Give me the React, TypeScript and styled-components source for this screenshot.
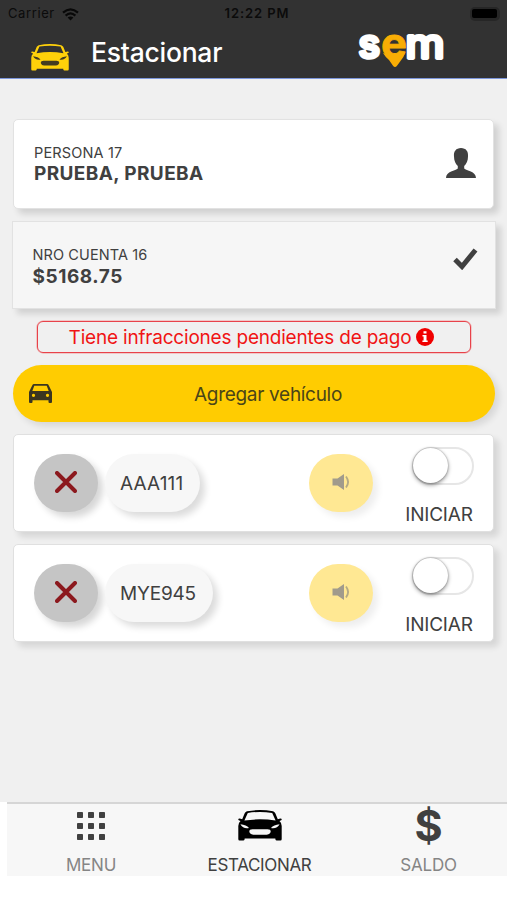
import React from "react";
import styled, { createGlobalStyle } from "styled-components";

const GlobalStyle = createGlobalStyle`
  * { box-sizing: border-box; }
  body { margin: 0; background: #fff; font-family: Inter, "Liberation Sans", sans-serif; color: #404040; }
  svg { display: block; flex: none; }
`;

const Screen = styled.div`
  width: 507px;
  height: 900px;
  display: flex;
  flex-direction: column;
  overflow: hidden;
  background: #fff;
`;

const Header = styled.header`
  height: 79px;
  flex: none;
  background: #323232;
  border-bottom: 1px solid #7d97dc;
`;

const StatusBar = styled.div`
  height: 27px;
  padding: 1px 7px 0 8px;
  display: grid;
  grid-template-columns: 1fr auto 1fr;
  align-items: center;
  color: #0b0b0b;
`;

const Carrier = styled.div`
  display: flex;
  align-items: center;
  gap: 7px;
`;

const Clock = styled.div`
  display: flex;
  padding-left: 6px;
`;

const Label = styled.span<{ $size: number; $weight?: number; $spacing?: number; $color?: string }>`
  font-size: ${(p) => p.$size}px;
  font-weight: ${(p) => p.$weight ?? 400};
  letter-spacing: ${(p) => p.$spacing ?? 0}px;
  color: ${(p) => p.$color ?? "inherit"};
  line-height: 1.2;
  white-space: nowrap;
`;

const Battery = styled.div`
  justify-self: end;
  width: 30px;
  height: 14px;
  padding: 2px;
  border-radius: 5px;
  background: #262626;
  &::before {
    content: "";
    display: block;
    height: 9px;
    width: 25px;
    border-radius: 2px;
    background: #000;
  }
`;

const TitleBar = styled.div`
  height: 51px;
  display: flex;
  padding-left: 31px;
`;

const TitleIcon = styled.div`
  padding-top: 17px;
  width: 60px;
`;

const Title = styled.h1`
  margin: 9px 0 0;
  width: 261px;
  font-size: 26.5px;
  font-weight: 500;
  line-height: 32px;
  letter-spacing: -0.25px;
  color: #fff;
`;

const LogoBox = styled.div`
  margin-top: -10px;
`;

const Content = styled.main`
  height: 723px;
  flex: none;
  background: #f0f0f0;
  padding: 40px 12px 0;
  display: flex;
  flex-direction: column;
  align-items: center;
`;

const InfoCard = styled.section<{ $flat?: boolean }>`
  width: ${(p) => (p.$flat ? 484 : 481)}px;
  height: ${(p) => (p.$flat ? 88 : 90)}px;
  margin-bottom: 12px;
  padding: 24px 17px 0 20px;
  display: flex;
  justify-content: space-between;
  background: ${(p) => (p.$flat ? "#f6f6f6" : "#fff")};
  border: 1px solid #e2e2e2;
  border-radius: ${(p) => (p.$flat ? 0 : 5)}px;
  box-shadow: 5px 5px 6px rgba(0, 0, 0, 0.13);
`;

const InfoText = styled.div<{ $gap: number }>`
  display: flex;
  flex-direction: column;
  gap: ${(p) => p.$gap}px;
`;

const InfoIcon = styled.div<{ $top: number }>`
  padding-top: ${(p) => p.$top}px;
`;

const Alert = styled.div`
  width: 434px;
  height: 32px;
  display: flex;
  align-items: center;
  justify-content: center;
  gap: 5px;
  padding: 0 4px 0 0;
  border: 1.5px solid #e8424a;
  border-radius: 6px;
  box-shadow: 0 0 0 0.5px #f0a0a0;
`;

const AlertText = styled.div`
  padding-top: 2px;
`;

const AddButton = styled.button`
  width: 482px;
  height: 57px;
  margin: 12px 0;
  padding: 0 5px 0 16px;
  display: grid;
  grid-template-columns: 24px 1fr;
  align-items: center;
  border: 0;
  border-radius: 29px;
  background: #ffcc01;
  color: #4a4518;
  font-family: inherit;
  box-shadow: 4px 4px 7px rgba(0, 0, 0, 0.11);
`;

const ButtonText = styled.span`
  padding: 3px 6px 0 0;
`;

const VehicleCard = styled.section`
  width: 481px;
  height: 98px;
  margin-bottom: 12px;
  padding: 0 20px;
  display: flex;
  align-items: center;
  flex: none;
  background: #fff;
  border: 1px solid #e0e0e0;
  border-radius: 5px;
  box-shadow: 5px 5px 6px rgba(0, 0, 0, 0.11);
`;

const RoundButton = styled.button<{ $pale?: boolean }>`
  width: 64px;
  height: 58px;
  padding: 0 1px 2px 0;
  display: grid;
  place-items: center;
  flex: none;
  border: 0;
  border-radius: 29px;
  background: ${(p) => (p.$pale ? "#ffe893" : "#c5c5c5")};
  box-shadow: 5px 5px 7px rgba(0, 0, 0, ${(p) => (p.$pale ? 0.07 : 0.16)});
`;

const Plate = styled.div`
  height: 58px;
  margin: 0 auto 0 7px;
  padding: 2px 17px 0 15px;
  display: flex;
  align-items: center;
  border-radius: 29px;
  background: #f7f7f7;
  box-shadow: 5px 5px 7px rgba(0, 0, 0, 0.14);
`;

const StartControl = styled.div`
  width: 68px;
  height: 96px;
  margin-left: 32px;
  display: flex;
  flex-direction: column;
  align-items: center;
  padding-top: 12px;
  gap: 19px;
`;

const Switch = styled.div`
  width: 62px;
  height: 38px;
  margin-left: 8px;
  border: 2px solid #e6e6e6;
  border-radius: 19px;
  flex: none;
  &::before {
    content: "";
    display: block;
    width: 35px;
    height: 35px;
    margin: -1px 0 0 -1px;
    border-radius: 50%;
    background: #fff;
    box-shadow: 0 2px 4px rgba(0, 0, 0, 0.42), 0 0 2px rgba(0, 0, 0, 0.35);
  }
`;

const Footer = styled.nav`
  height: 74px;
  margin-left: 7px;
  flex: none;
  display: grid;
  grid-template-columns: 168px 169px 169px;
  background: #f7f7f7;
  border-top: 2px solid #d6d6d6;
`;

const Tab = styled.div`
  display: flex;
  flex-direction: column;
  align-items: center;
`;

const TabIcon = styled.div`
  height: 51px;
  display: flex;
  align-items: center;
  padding-bottom: 8px;
`;

const Wifi = () => (
  <svg width="17" height="13" viewBox="0 0 17 13" fill="none" stroke="#080808" strokeWidth="2.2">
    <path d="M1 4.7Q8.5-1.8 16 4.7M3.6 7.6Q8.5 3.2 13.4 7.6" />
    <path d="M8.5 12.5 5.6 9.6q2.9-2.4 5.8 0z" fill="#080808" stroke="none" />
  </svg>
);

const FrontCar = ({ body, trim, width, height }: { body: string; trim: string; width: number; height: number }) => (
  <svg width={width} height={height} viewBox="0 0 44 31" preserveAspectRatio="none">
    <path fill={body} fillRule="evenodd" d="M9 1.3Q22-1.1 35 1.3q1.5.5 2.3 2l2.5 6q3.8-1.8 4 .3 0 1-2.3 1.4 2.4 2.1 2.2 5.5V29q0 1.5-1.2 1.5h-4q-1.2 0-1.2-2H6.7q0 2-1.2 2h-4Q.3 30.500.3 29V16.500q-.2-3.400 2.200-5.500Q.2 10.600.2 9.600q.2-2.100 4-.3l2.500-6q.8-1.500 2.300-2zM9.800 3 6.400 10.500Q22 8.100 37.600 10.500L34.200 3Q22 .9 9.800 3z" />
    <path fill={trim} d="M2.400 14.200q6 .6 8.600 3.800-6 1-8.600-3.800zm39.200 0q-6 .6-8.600 3.800 6 1 8.600-3.800zM14.500 19.200h15q3.200 0 3.200 2 0 2.800-4 3.500h-13.400q-4-.7-4-3.500 0-2 3.200-2z" />
  </svg>
);

const Logo = () => (
  <svg width="96" height="60" viewBox="0 0 96 60">
    <g fontFamily="Inter, sans-serif" fontSize="39" strokeLinejoin="round" strokeLinecap="round">
      <path fill="#f8ad05" d="M31 36q11 4.500 22 0-1 4-4.500 8L45 48.800q-2 2.400-4 0L37 43Q33 39.500 31 36z" />
      <text x="6.500" y="40.500" fontWeight="500" fill="#fff" stroke="#fff" strokeWidth="3.600" textLength="21.500" lengthAdjust="spacingAndGlyphs">s</text>
      <text x="29" y="41" fontSize="41" fontWeight="700" fill="#f8ad05" stroke="#f8ad05" strokeWidth="0.800" textLength="26" lengthAdjust="spacingAndGlyphs">e</text>
      <text x="53.500" y="40.500" fontWeight="400" fill="#fff" stroke="#fff" strokeWidth="3.800" textLength="39" lengthAdjust="spacingAndGlyphs">m</text>
    </g>
  </svg>
);

const Person = () => (
  <svg width="30" height="30" viewBox="0 0 30 30" fill="#404040">
    <path d="M15 0c5 0 7.500 3.500 7 8.500 0 4-1.500 7.500-3.800 9.500v2.500c2 2.100 11.800 2.800 11.800 9.500H0c0-6.700 9.800-7.400 11.800-9.500V18C9.500 16 8 12.500 8 8.500 7.500 3.500 10 0 15 0z" />
  </svg>
);

const Check = () => (
  <svg width="25" height="22" viewBox="0 0 25 22" fill="none" stroke="#404040" strokeWidth="5">
    <path d="M2 11.500 9 18.500 22.500 2" />
  </svg>
);

const InfoMark = () => (
  <svg width="18" height="18" viewBox="0 0 18 18">
    <circle cx="9" cy="9" r="9" fill="#f00000" />
    <path fill="#fff" d="M7.500 3.200h3v2.300h-3zM6.500 7h4v5.500h1.200V14H6.400v-1.500h1.200v-4H6.500z" />
  </svg>
);

const SmallCar = () => (
  <svg width="23" height="19" viewBox="0 0 23 19">
    <path fill="#3b3520" fillRule="evenodd" d="M5.200 0h12.600q1.500 0 2 1.400L23 8v10q0 1-1 1h-1.500q-1 0-1-1v-1.700h-16V18q0 1-1 1H1q-1 0-1-1V8l3.200-6.600Q3.700 0 5.200 0zM5.300 1.800 3.300 7h16.400l-2-5.200zM4.500 9.800a1.600 1.600 0 1 0 .01 0zM18.500 9.800a1.600 1.600 0 1 0 .01 0z" />
  </svg>
);

const Cross = () => (
  <svg width="22" height="22" viewBox="0 0 22 22" stroke="#8c191e" strokeWidth="4" strokeLinecap="round">
    <path d="M2 2 20 20M20 2 2 20" />
  </svg>
);

const Speaker = () => (
  <svg width="18" height="18" viewBox="0 0 18 18">
    <path fill="#a19b8c" d="M.5 5.500h5L12 1v16l-6.500-4.500h-5z" />
    <path fill="none" stroke="#b5aa83" strokeWidth="1.800" d="M14 3.500q4.200 5.500 0 11" />
  </svg>
);

const MenuDots = () => (
  <svg width="28" height="28" viewBox="0 0 28 28" fill="#404040">
    {[0, 11, 22].map((y) => [0, 11, 22].map((x) => <rect key={`${x}-${y}`} x={x} y={y} width="6" height="6" rx="0.800" />))}
  </svg>
);

const vehicles = [
  { plate: "AAA111", spacing: 0.15 },
  { plate: "MYE945", spacing: -0.2 },
];

export default function App() {
  return (
    <Screen>
      <GlobalStyle />
      <Header>
        <StatusBar>
          <Carrier>
            <Label $size={13} $spacing={0.6}>Carrier</Label>
            <Wifi />
          </Carrier>
          <Clock><Label $size={13} $weight={600} $spacing={0.9}>12:22 PM</Label></Clock>
          <Battery />
        </StatusBar>
        <TitleBar>
          <TitleIcon><FrontCar body="#ffd10a" trim="#443c20" width={38} height={27} /></TitleIcon>
          <Title>Estacionar</Title>
          <LogoBox><Logo /></LogoBox>
        </TitleBar>
      </Header>
      <Content>
        <InfoCard>
          <InfoText $gap={2}>
            <Label $size={14.5} $spacing={0.15}>PERSONA 17</Label>
            <Label $size={19} $weight={700} $spacing={0.38}>PRUEBA, PRUEBA</Label>
          </InfoText>
          <InfoIcon $top={4}><Person /></InfoIcon>
        </InfoCard>
        <InfoCard $flat>
          <InfoText $gap={3}>
            <Label $size={14.5} $spacing={0.1}>NRO CUENTA 16</Label>
            <Label $size={19} $weight={700} $spacing={0.55}>$5168.75</Label>
          </InfoText>
          <InfoIcon $top={2}><Check /></InfoIcon>
        </InfoCard>
        <Alert>
          <AlertText><Label $size={19} $spacing={-0.2} $color="#f01414">Tiene infracciones pendientes de pago</Label></AlertText>
          <InfoMark />
        </Alert>
        <AddButton>
          <SmallCar />
          <ButtonText><Label $size={19} $spacing={-0.3}>Agregar vehículo</Label></ButtonText>
        </AddButton>
        {vehicles.map((v) => (
          <VehicleCard key={v.plate}>
            <RoundButton><Cross /></RoundButton>
            <Plate><Label $size={19} $spacing={v.spacing}>{v.plate}</Label></Plate>
            <RoundButton $pale><Speaker /></RoundButton>
            <StartControl>
              <Switch />
              <Label $size={19} $spacing={-0.2}>INICIAR</Label>
            </StartControl>
          </VehicleCard>
        ))}
      </Content>
      <Footer>
        <Tab>
          <TabIcon><MenuDots /></TabIcon>
          <Label $size={17} $spacing={-0.2} $color="#858585">MENU</Label>
        </Tab>
        <Tab>
          <TabIcon><FrontCar body="#000" trim="#f7f7f7" width={44} height={31} /></TabIcon>
          <Label $size={17} $spacing={-0.35}>ESTACIONAR</Label>
        </Tab>
        <Tab>
          <TabIcon><Label $size={43} $weight={700}>$</Label></TabIcon>
          <Label $size={17} $spacing={-0.2} $color="#858585">SALDO</Label>
        </Tab>
      </Footer>
    </Screen>
  );
}
